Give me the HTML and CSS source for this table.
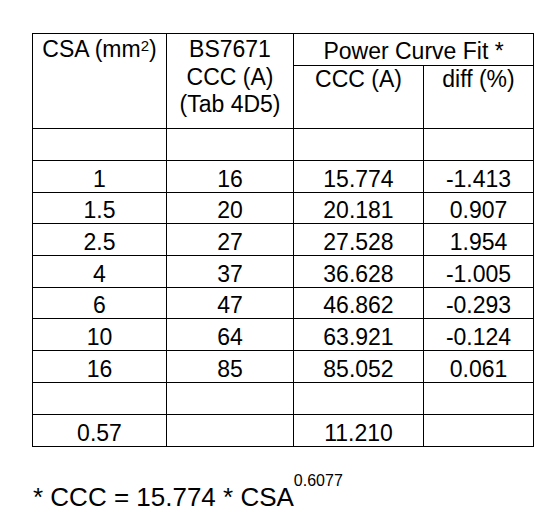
FILE: index.html
```html
<!DOCTYPE html>
<html>
<head>
<meta charset="utf-8">
<link rel="stylesheet" href="styles.css">
</head>
<body>
<div class="page">
  <table class="ccc">
    <colgroup>
      <col class="c1"><col class="c2"><col class="c3"><col class="c4">
    </colgroup>
    <tr class="h1">
      <td rowspan="2" class="top">CSA (mm<span class="sup">2</span>)</td>
      <td rowspan="2" class="top">BS7671<br>CCC (A)<br>(Tab 4D5)</td>
      <td colspan="2" class="mid">Power Curve Fit *</td>
    </tr>
    <tr class="h2">
      <td class="top2">CCC (A)</td>
      <td class="top2">diff (%)</td>
    </tr>
    <tr class="r32"><td></td><td></td><td></td><td></td></tr>
    <tr class="r32"><td>1</td><td>16</td><td>15.774</td><td>-1.413</td></tr>
    <tr class="r31"><td>1.5</td><td>20</td><td>20.181</td><td>0.907</td></tr>
    <tr class="r32"><td>2.5</td><td>27</td><td>27.528</td><td>1.954</td></tr>
    <tr class="r32"><td>4</td><td>37</td><td>36.628</td><td>-1.005</td></tr>
    <tr class="r31"><td>6</td><td>47</td><td>46.862</td><td>-0.293</td></tr>
    <tr class="r32"><td>10</td><td>64</td><td>63.921</td><td>-0.124</td></tr>
    <tr class="r32"><td>16</td><td>85</td><td>85.052</td><td>0.061</td></tr>
    <tr class="r32"><td></td><td></td><td></td><td></td></tr>
    <tr class="r32"><td>0.57</td><td></td><td>11.210</td><td></td></tr>
  </table>
  <p class="note">* CCC = 15.774 * CSA<span class="exp">0.6077</span></p>
</div>
</body>
</html>
```
FILE: styles.css
```css
html, body {
  margin: 0;
  padding: 0;
  background: #fff;
}
body {
  font-family: "Liberation Sans", Arial, sans-serif;
  color: #000;
}
.page {
  padding: 33px 0 0 32px;
}
.ccc {
  border-collapse: collapse;
  table-layout: fixed;
  width: 502px;
  font-size: 23px;
  line-height: 27.5px;
}
.c1 { width: 134px; }
.c2 { width: 127px; }
.c3 { width: 130px; }
.c4 { width: 110px; }
.ccc td {
  border: 1px solid #000;
  text-align: center;
  vertical-align: middle;
  padding: 4px 0 0;
  line-height: 24px;
  white-space: nowrap;
}
.ccc td.top {
  vertical-align: top;
  padding: 2px 0 0;
  line-height: 27.5px;
}
.ccc td.top2 {
  vertical-align: top;
  padding: 0;
  line-height: 27.5px;
}
.ccc td.mid {
  padding: 2px 0 0;
}
.h1 { height: 32px; }
.h2 { height: 63px; }
.r32 { height: 32px; }
.r31 { height: 31px; }
.sup {
  font-size: 15px;
  vertical-align: 6px;
  line-height: 0;
}
.note {
  margin: 34px 0 0 1px;
  font-size: 26px;
  line-height: 30px;
}
.exp {
  font-size: 16px;
  vertical-align: 20px;
  line-height: 0;
}
```
